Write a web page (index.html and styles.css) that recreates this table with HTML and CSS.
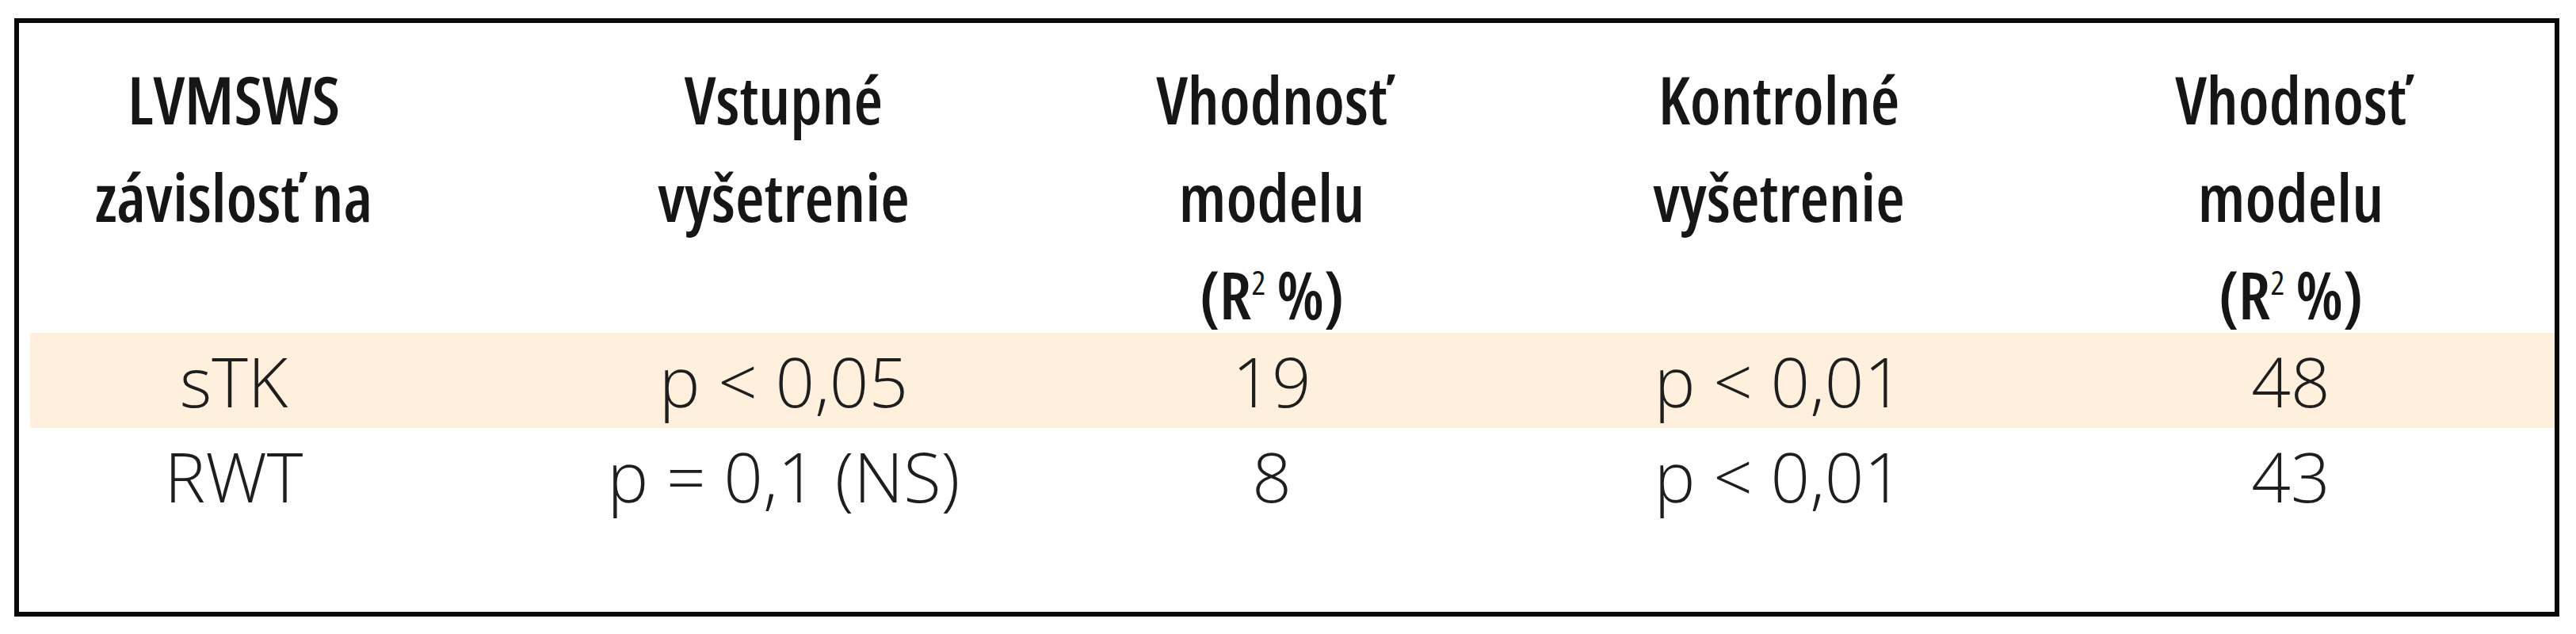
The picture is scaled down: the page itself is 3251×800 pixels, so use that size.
FILE: index.html
```html
<!DOCTYPE html>
<html lang="sk">
<head>
<meta charset="utf-8">
<title>LVMSWS</title>
<link rel="stylesheet" href="styles.css">
</head>
<body>
<div class="table">
  <div class="row head">
    <div class="cell">LVMSWS<br>závislosť na</div>
    <div class="cell">Vstupné<br>vyšetrenie</div>
    <div class="cell">Vhodnosť<br>modelu<br>(R<span class="sup">2</span>&#8201;%)</div>
    <div class="cell">Kontrolné<br>vyšetrenie</div>
    <div class="cell">Vhodnosť<br>modelu<br>(R<span class="sup">2</span>&#8201;%)</div>
  </div>
  <div class="row body hl">
    <div class="cell">sTK</div>
    <div class="cell">p &lt; 0,05</div>
    <div class="cell">19</div>
    <div class="cell">p &lt; 0,01</div>
    <div class="cell">48</div>
  </div>
  <div class="row body">
    <div class="cell">RWT</div>
    <div class="cell">p = 0,1 (NS)</div>
    <div class="cell">8</div>
    <div class="cell">p &lt; 0,01</div>
    <div class="cell">43</div>
  </div>
</div>
</body>
</html>
```
FILE: styles.css
```css
html, body {
  margin: 0;
  padding: 0;
  background: #ffffff;
}
body {
  font-family: "Open Sans", "Noto Sans", sans-serif;
  color: #1c1c1c;
}
.table {
  margin: 23px 0 0 18px;
  width: 3200px;
  height: 743px;
  border: 6px solid #0a0a0a;
}
.row {
  display: grid;
  grid-template-columns: 514px 874px 358px 922px 370px;
  margin-left: 14px;
  text-align: center;
  white-space: nowrap;
}
.head {
  height: 357px;
  padding-top: 34px;
  font-size: 84px;
  font-weight: 600;
  font-stretch: 82%;
  line-height: 123px;
  color: #161616;
}
.sup {
  font-size: 0.5em;
  font-weight: 500;
  vertical-align: 0.75em;
  line-height: 0;
}
.body {
  height: 120px;
  font-size: 87px;
  font-weight: 300;
  line-height: 120px;
  color: #1e1e1e;
}
.hl {
  background: #fef0dc;
}
```
